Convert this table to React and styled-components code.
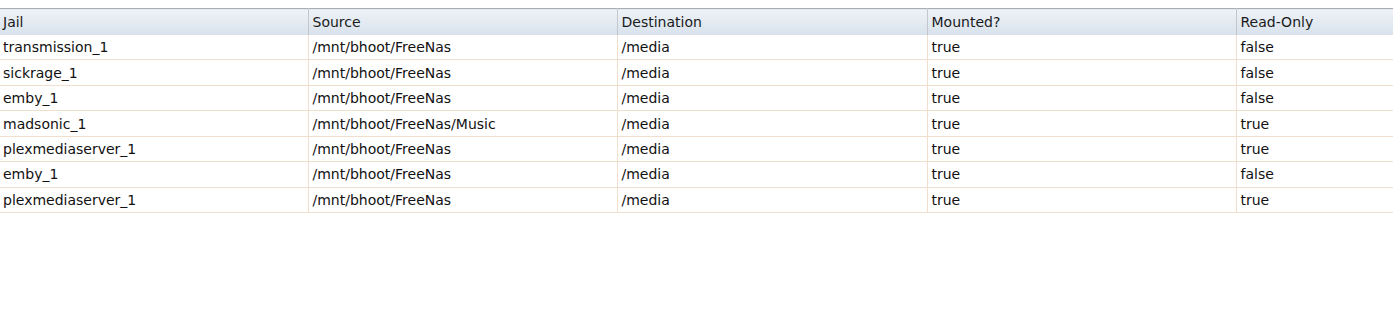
import React from "react";
import styled, { createGlobalStyle } from "styled-components";

const GlobalStyle = createGlobalStyle`
  body {
    margin: 0;
    background: #fff;
    font-family: "DejaVu Sans", Verdana, sans-serif;
  }
`;

const Wrapper = styled.div`
  padding-top: 8px;
  width: 1393px;
  overflow: hidden;
`;

const Grid = styled.table`
  width: 1546px;
  table-layout: fixed;
  border-collapse: collapse;
  border-top: 1px solid #a9acb0;
`;

const Col = styled.col`
  width: ${(p) => p.$w}px;
`;

const HeadCell = styled.th`
  height: 26px;
  padding: 0 3px 0 4px;
  text-align: left;
  font-weight: normal;
  font-size: 14px;
  color: #1a1a1a;
  background: linear-gradient(#eef2f7, #d8e2ec);
  border-right: 1px solid #c3c7cc;
  white-space: nowrap;
  overflow: hidden;

  &:first-child {
    padding-left: 3px;
  }
`;

const Row = styled.tr`
  border-bottom: 1px solid #f0dfcc;
`;

const Cell = styled.td`
  height: 24.45px;
  padding: 0 3px 0 4px;
  font-size: 14px;
  color: #111;
  border-right: 1px solid #f0dfcc;
  white-space: nowrap;
  overflow: hidden;

  &:first-child {
    padding-left: 3px;
  }
`;

const columns = ["Jail", "Source", "Destination", "Mounted?", "Read-Only"];
const widths = [308, 309, 310, 309, 310];

const mounts = [
  ["transmission_1", "/mnt/bhoot/FreeNas", "/media", "true", "false"],
  ["sickrage_1", "/mnt/bhoot/FreeNas", "/media", "true", "false"],
  ["emby_1", "/mnt/bhoot/FreeNas", "/media", "true", "false"],
  ["madsonic_1", "/mnt/bhoot/FreeNas/Music", "/media", "true", "true"],
  ["plexmediaserver_1", "/mnt/bhoot/FreeNas", "/media", "true", "true"],
  ["emby_1", "/mnt/bhoot/FreeNas", "/media", "true", "false"],
  ["plexmediaserver_1", "/mnt/bhoot/FreeNas", "/media", "true", "true"],
];

export default function App() {
  return (
    <Wrapper>
      <GlobalStyle />
      <Grid>
        <colgroup>
          {widths.map((w, i) => (
            <Col key={i} $w={w} />
          ))}
        </colgroup>
        <thead>
          <tr>
            {columns.map((c) => (
              <HeadCell key={c}>{c}</HeadCell>
            ))}
          </tr>
        </thead>
        <tbody>
          {mounts.map((m, i) => (
            <Row key={i}>
              {m.map((v, j) => (
                <Cell key={j}>{v}</Cell>
              ))}
            </Row>
          ))}
        </tbody>
      </Grid>
    </Wrapper>
  );
}
